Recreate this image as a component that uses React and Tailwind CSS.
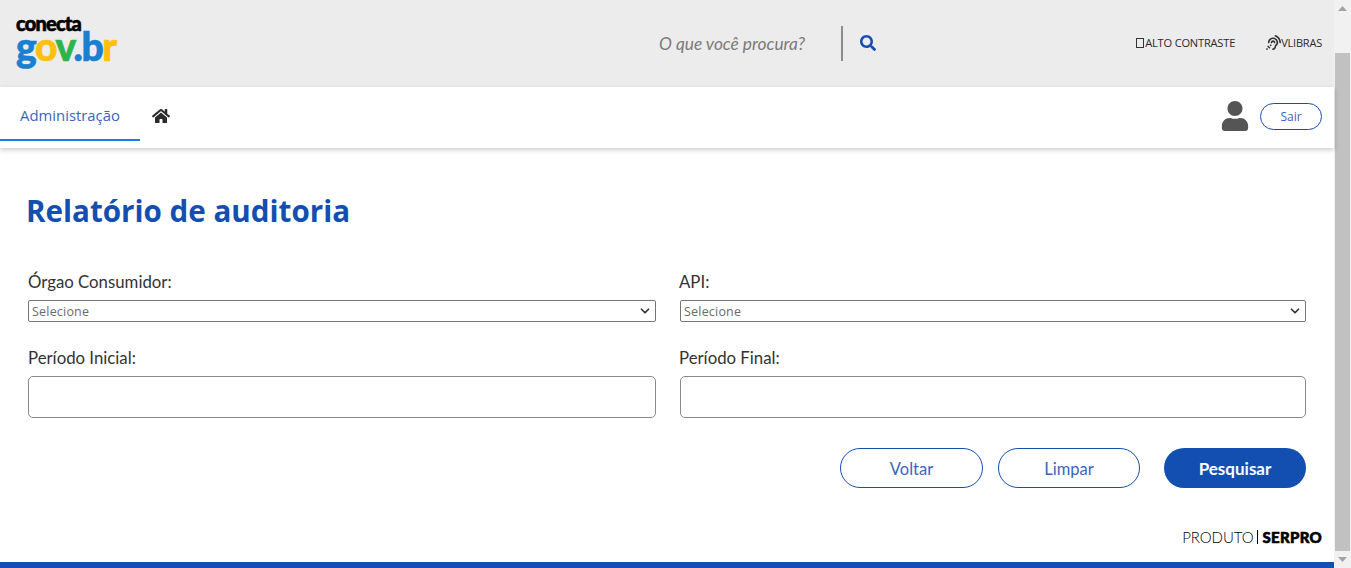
import React from "react";
import { FaHome, FaSearch, FaUser, FaAssistiveListeningSystems } from "react-icons/fa";
import { ChevronDown } from "lucide-react";

const sans = "font-['Open_Sans','Noto_Sans',sans-serif]";
const rale = "font-['Lato','Noto_Sans',sans-serif]";

function Field({ label, right, children }) {
  return (
    <div className="flex flex-col">
      <label className={`${rale} ${right ? "-ml-px" : ""} text-[16.8px] leading-[20px] h-[20px] text-[#333] mb-[8px]`}>{label}</label>
      {children}
    </div>
  );
}

function FakeSelect() {
  return (
    <div className="h-[22px] border border-[#767676] rounded-[2px] bg-white flex items-center justify-between pl-[3px] pr-[3px]">
      <span className={`${sans} text-[12.5px] leading-[22px] pt-[1px] text-[#6b6b6b] tracking-[0.2px]`}>Selecione</span>
      <ChevronDown size={14} strokeWidth={3} className="text-[#333]" />
    </div>
  );
}

function Input() {
  return <div className="h-[42px] border border-[#8a8a8a] rounded-[5px] bg-white" />;
}

export default function App() {
  return (
    <div className="w-[1351px] h-[568px] overflow-hidden flex bg-white">
      <div className="w-[1334px] h-full flex flex-col">
        <header className="h-[87px] shrink-0 bg-[#ececec] flex items-start pl-[16px] pr-[12px]">
          <div className="w-[110px] pt-[14px] flex flex-col font-['Lato',sans-serif] font-black select-none">
            <span className="text-[20px] leading-[18px] tracking-[-0.8px] text-black h-[18px] [-webkit-text-stroke:0.6px_#000]">conecta</span>
            <span className="text-[39px] leading-[28px] tracking-[-1.4px] [-webkit-text-stroke:0.7px_currentColor]">
              <span className="text-[#1a7fd0]">g</span>
              <span className="text-[#fdc00f]">o</span>
              <span className="text-[#2fb44a]">v</span>
              <span className="text-[#1a7fd0]">.b</span>
              <span className="text-[#fdc00f]">r</span>
            </span>
          </div>
          <div className="ml-[533px] pt-[26px] flex items-start">
            <span className={`${rale} italic text-[17.3px] leading-[36px] text-[#7a7a7a] w-[182px]`}>O que você procura?</span>
            <div className="w-[2px] h-[35px] bg-[#8c8c8c]" />
            <FaSearch size={16} className="text-[#134fb0] ml-[17px] mt-[9px]" />
          </div>
          <div className="ml-auto pt-[35px] flex items-center text-[#2b2b2b]">
            <div className={`${sans} flex items-center text-[11.1px] leading-[14px] font-normal tracking-[-0.2px]`}>
              <span className="w-[8px] h-[10px] border border-[#333] mr-[1px]" />
              ALTO CONTRASTE
            </div>
            <div className={`${sans} flex items-center text-[11px] leading-[14px] font-normal tracking-[-0.2px] ml-[31px]`}>
              <FaAssistiveListeningSystems size={15} className="text-[#333]" />
              VLIBRAS
            </div>
          </div>
        </header>

        <nav className="h-[61px] shrink-0 bg-white shadow-[0_2px_5px_rgba(0,0,0,0.2)] flex items-start pr-[12px] relative">
          <div className={`${sans} w-[140px] h-[54px] border-b-2 border-[#1a7fe8] text-[#3a66bf] text-[14.85px] leading-[57px] text-center`}>
            Administração
          </div>
          <FaHome size={18} className="ml-[12px] mt-[20px] text-[#2b2b2b]" />
          <div className="ml-auto flex items-center mt-[14px]">
            <FaUser size={30} className="text-[#555]" />
            <div className={`${sans} ml-[10px] w-[62px] h-[27px] border border-[#134fb0] rounded-full text-[#3a66bf] text-[12px] pt-[2px] flex items-center justify-center`}>
              Sair
            </div>
          </div>
        </nav>

        <main className="flex-1 flex flex-col px-[28px]">
          <h1 className={`${sans} mt-[43px] ml-[-2px] text-[29.6px] leading-[40px] font-bold text-[#134fb0]`}>Relatório de auditoria</h1>
          <div className="mt-[41px] grid grid-cols-[628px_626px] gap-x-[24px] gap-y-[26px] w-[1278px]">
            <Field label="Órgao Consumidor:"><FakeSelect /></Field>
            <Field label="API:" right><FakeSelect /></Field>
            <Field label="Período Inicial:"><Input /></Field>
            <Field label="Período Final:" right><Input /></Field>
          </div>
          <div className={`${rale} mt-[30px] w-[1278px] flex justify-end text-[16.5px]`}>
            <div className="w-[143px] h-[40px] pt-[2px] rounded-full border border-[#134fb0] text-[#3a66bf] flex items-center justify-center">Voltar</div>
            <div className="ml-[15px] w-[142px] h-[40px] pt-[2px] rounded-full border border-[#134fb0] text-[#3a66bf] flex items-center justify-center">Limpar</div>
            <div className="ml-[24px] w-[142px] h-[40px] pt-[1px] rounded-full bg-[#134fb0] text-white text-[17px] font-bold flex items-center justify-center">Pesquisar</div>
          </div>
          <div className="mt-[39px] mr-[-16px] flex justify-end items-center text-black">
            <span className={`${rale} text-[15px] leading-[20px] font-light tracking-[-0.1px]`}>PRODUTO</span>
            <span className="w-px h-[14px] bg-black mx-[4px]" />
            <span className={`${rale} text-[15px] leading-[20px] font-black tracking-[0.3px] [-webkit-text-stroke:0.6px_#000]`}>SERPRO</span>
          </div>
        </main>

        <div className="h-[6px] shrink-0 bg-[#134fb0]" />
      </div>

      <div className="w-[17px] h-full bg-[#f1f1f1] flex flex-col items-center">
        <div className="h-[17px] shrink-0 flex items-center justify-center">
          <svg width="9" height="5" viewBox="0 0 9 5"><path d="M4.5 0L9 5H0z" fill="#a3a3a3" /></svg>
        </div>
        <div className="mt-[36px] w-[15px] h-[498px] bg-[#c1c1c1]" />
        <div className="h-[17px] shrink-0 flex items-center justify-center">
          <svg width="9" height="5" viewBox="0 0 9 5"><path d="M0 0H9L4.5 5z" fill="#a3a3a3" /></svg>
        </div>
      </div>
    </div>
  );
}
